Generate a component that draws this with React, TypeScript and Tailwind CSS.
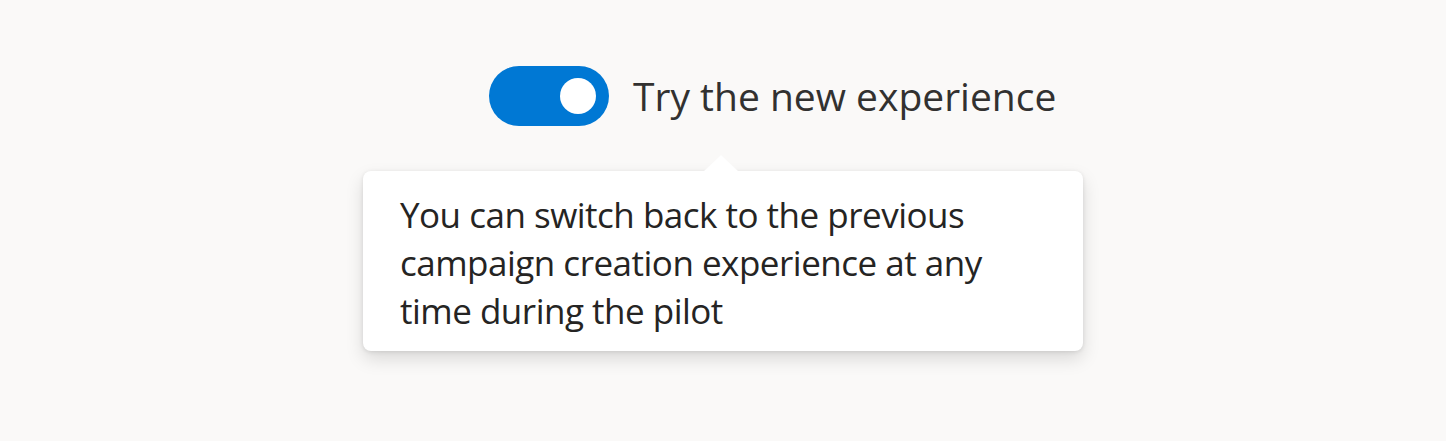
export default function App() {
  return (
    <div
      className="min-h-screen bg-[#faf9f8] text-[#323130]"
      style={{ fontFamily: '"Open Sans", "Noto Sans", sans-serif' }}
    >
      <div className="w-[720px] mx-auto pt-[66px]">
        <div className="flex items-center pl-[126px] gap-[24px]">
          <button className="w-[120px] h-[60px] rounded-full bg-[#0078d4] flex items-center justify-end pr-[13px] shrink-0">
            <span className="w-[36px] h-[36px] rounded-full bg-white" />
          </button>
          <span className="text-[39px] leading-[60px]">Try the new experience</span>
        </div>

        <div className="relative mt-[45px] bg-white rounded-[8px] shadow-[0_8px_18px_rgba(0,0,0,0.13),0_1px_4px_rgba(0,0,0,0.1)] pl-[37px] pr-[30px] pt-[20px] pb-[16px]">
          <div className="absolute -top-[16px] left-[341px] w-0 h-0 border-l-[17px] border-r-[17px] border-b-[16px] border-l-transparent border-r-transparent border-b-white" />
          <p className="text-[35px] leading-[48px] tracking-[-0.5px] text-[#252423]">
            You can switch back to the previous campaign creation experience at any time during the pilot
          </p>
        </div>
      </div>
    </div>
  );
}
